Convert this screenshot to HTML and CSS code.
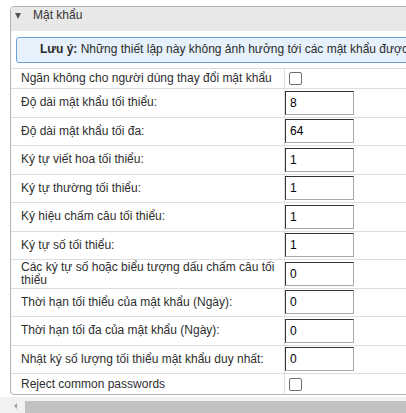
FILE: index.html
```html
<!DOCTYPE html>
<html lang="vi">
<head>
<meta charset="utf-8">
<title>Mật khẩu</title>
<link rel="stylesheet" href="styles.css">
</head>
<body>
<div class="page">
  <section class="panel">
    <div class="panel-head"><span class="caret"></span><span class="title">Mật khẩu</span></div>
    <div class="notice"><b>Lưu ý:</b> Những thiết lập này không ảnh hưởng tới các mật khẩu được lưu trữ hiện tại.</div>
    <div class="tbl">
      <div class="row short"><div class="lbl">Ngăn không cho người dùng thay đổi mật khẩu</div><div class="val"><input type="checkbox" class="cb"></div></div>
      <div class="row"><div class="lbl">Độ dài mật khẩu tối thiểu:</div><div class="val"><input class="txt" value="8"></div></div>
      <div class="row"><div class="lbl">Độ dài mật khẩu tối đa:</div><div class="val"><input class="txt" value="64"></div></div>
      <div class="row"><div class="lbl">Ký tự viết hoa tối thiểu:</div><div class="val"><input class="txt" value="1"></div></div>
      <div class="row"><div class="lbl">Ký tự thường tối thiểu:</div><div class="val"><input class="txt" value="1"></div></div>
      <div class="row"><div class="lbl">Ký hiệu chấm câu tối thiểu:</div><div class="val"><input class="txt" value="1"></div></div>
      <div class="row"><div class="lbl">Ký tự số tối thiểu:</div><div class="val"><input class="txt" value="1"></div></div>
      <div class="row"><div class="lbl">Các ký tự số hoặc biểu tượng dấu chấm câu tối thiểu</div><div class="val"><input class="txt" value="0"></div></div>
      <div class="row"><div class="lbl">Thời hạn tối thiểu của mật khẩu (Ngày):</div><div class="val"><input class="txt" value="0"></div></div>
      <div class="row"><div class="lbl">Thời hạn tối đa của mật khẩu (Ngày):</div><div class="val"><input class="txt" value="0"></div></div>
      <div class="row"><div class="lbl">Nhật ký số lượng tối thiểu mật khẩu duy nhất:</div><div class="val"><input class="txt" value="0"></div></div>
      <div class="row last"><div class="lbl">Reject common passwords</div><div class="val"><input type="checkbox" class="cb"></div></div>
    </div>
  </section>
  <div class="hscroll"><span class="arrow"></span><span class="thumb"></span></div>
</div>
</body>
</html>
```
FILE: styles.css
```css
html, body {
  margin: 0;
  padding: 0;
  background: #ffffff;
  overflow: hidden;
}
body {
  font-family: "Liberation Sans", Arial, sans-serif;
  font-size: 12px;
  color: #333333;
}
.page {
  width: 406px;
  height: 413px;
  overflow: hidden;
  padding-top: 6px;
  box-sizing: border-box;
}
.panel {
  width: 700px;
  margin-left: 10px;
  border: 1px solid #b3b3b3;
  border-radius: 4px;
  overflow: hidden;
}
.panel-head {
  height: 24px;
  box-sizing: border-box;
  padding: 1px 0 0 4px;
  background: #e8e8e8;
  display: flex;
  align-items: flex-start;
  line-height: 14px;
}
.caret {
  width: 0;
  height: 0;
  margin: 5px 0 0 0;
  border-left: 3.5px solid transparent;
  border-right: 3.5px solid transparent;
  border-top: 6px solid #555555;
}
.title {
  margin-left: 12px;
  color: #333333;
}
.notice {
  margin: 6px 0 5px 5px;
  padding: 4px 0 5px 23px;
  line-height: 15px;
  background: #e6f1fc;
  border: 1px solid #6ea2dc;
  border-radius: 3px;
  white-space: nowrap;
  color: #2b2b2b;
}
.notice b {
  font-weight: bold;
}
.tbl {
  border-top: 1px solid #dddddd;
}
.row {
  display: grid;
  grid-template-columns: 274px 1fr;
  min-height: 27.5px;
  border-bottom: 1px solid #dddddd;
}
.row.short {
  min-height: 19px;
}
.row.last {
  min-height: 20px;
  border-bottom: none;
}
.lbl {
  display: flex;
  align-items: center;
  padding: 0 4px 0 10px;
  line-height: 13px;
  border-right: 1px solid #dddddd;
  color: #2e2e2e;
}
.val {
  display: flex;
  align-items: center;
}
.cb {
  appearance: none;
  -webkit-appearance: none;
  width: 13px;
  height: 13px;
  margin: 0 0 0 4px;
  box-sizing: border-box;
  border: 1px solid #6f6f6f;
  border-radius: 2px;
  background: #ffffff;
}
.txt {
  width: 69px;
  height: 24px;
  box-sizing: border-box;
  margin: 0;
  padding: 0 4px;
  font-family: "Liberation Sans", Arial, sans-serif;
  font-size: 12px;
  color: #000000;
  background: #ffffff;
  border-top: 1px solid #333333;
  border-left: 1px solid #333333;
  border-right: 1px solid #a9a9a9;
  border-bottom: 1px solid #a9a9a9;
  outline: none;
}
.hscroll {
  margin-top: 2px;
  height: 17px;
  background: #f1f1f1;
  display: flex;
  align-items: flex-start;
}
.arrow {
  width: 0;
  height: 0;
  margin: 6px 0 0 14px;
  border-top: 3px solid transparent;
  border-bottom: 3px solid transparent;
  border-right: 3px solid #a3a3a3;
}
.thumb {
  flex: 1;
  margin: 4px 0 0 8px;
  height: 13px;
  background: #c1c1c1;
}
```
